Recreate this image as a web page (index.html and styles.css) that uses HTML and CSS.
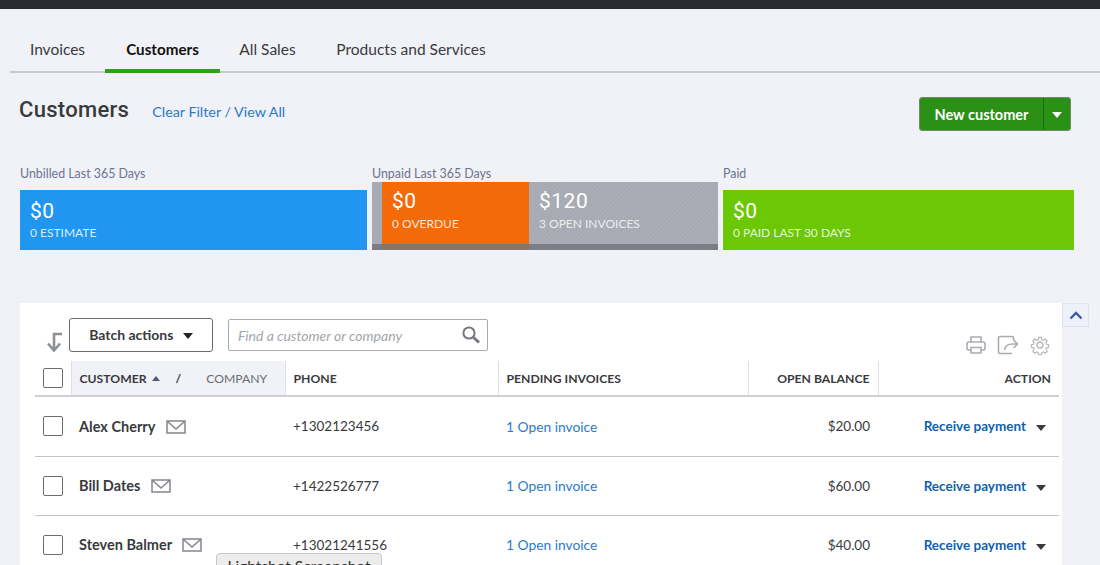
FILE: index.html
```html
<!DOCTYPE html>
<html lang="en">
<head>
  <meta charset="UTF-8" />
  <title>Customers</title>
  <link rel="stylesheet" href="styles.css">
</head>
<body>
  <div class="topbar"></div>

  <nav class="tabs">
    <a class="tab">Invoices</a>
    <a class="tab active">Customers</a>
    <a class="tab">All Sales</a>
    <a class="tab">Products and Services</a>
  </nav>

  <header class="page-head">
    <h1>Customers</h1>
    <a class="clear-link">Clear Filter / View All</a>
    <div class="new-btn">
      <span class="new-label">New customer</span>
      <span class="new-caret"><i class="caret white"></i></span>
    </div>
  </header>

  <section class="stats">
    <div class="stat-col">
      <div class="stat-label">Unbilled Last 365 Days</div>
      <div class="stat-bar blue">
        <div class="amount">$0</div>
        <div class="sub">0 ESTIMATE</div>
      </div>
    </div>
    <div class="stat-col">
      <div class="stat-label tight">Unpaid Last 365 Days</div>
      <div class="unpaid">
        <div class="overdue">
          <div class="amount">$0</div>
          <div class="sub">0 OVERDUE</div>
        </div>
        <div class="open">
          <div class="amount">$120</div>
          <div class="sub">3 OPEN INVOICES</div>
        </div>
      </div>
    </div>
    <div class="stat-col">
      <div class="stat-label">Paid</div>
      <div class="stat-bar green">
        <div class="amount">$0</div>
        <div class="sub">0 PAID LAST 30 DAYS</div>
      </div>
    </div>
  </section>

  <div class="table-wrap">
    <section class="card">
      <div class="toolbar">
        <svg class="sort-arrow" width="18" height="20" viewBox="0 0 18 20" fill="none" stroke="#8d9096" stroke-width="2.600">
          <path d="M16 2H8V18M2 11.500l6 7 6-7" />
        </svg>
        <button class="batch">Batch actions <i class="caret"></i></button>
        <div class="search">
          <span class="placeholder">Find a customer or company</span>
          <svg width="20" height="20" viewBox="0 0 20 20" fill="none" stroke="#77787e">
            <circle cx="8" cy="8" r="5.600" stroke-width="2" />
            <path d="M12.500 12.500l5.500 5" stroke-width="3" />
          </svg>
        </div>
        <div class="tools">
          <svg width="20" height="20" viewBox="0 0 20 20" fill="none" stroke="#a9acb2" stroke-width="1.600">
            <path d="M5 7V2h10v5M5 15H2.500a1.500 1.500 0 0 1-1.500-1.500V9a2 2 0 0 1 2-2h14a2 2 0 0 1 2 2v4.500a1.500 1.500 0 0 1-1.500 1.500H15M5 12.500h10V18H5z" />
          </svg>
          <svg width="22" height="20" viewBox="0 0 22 20" fill="none" stroke="#a9acb2" stroke-width="1.600">
            <path d="M15 18.500H3a1.500 1.500 0 0 1-1.500-1.500V3A1.500 1.500 0 0 1 3 1.500h12A1.500 1.500 0 0 1 16.500 3v2" />
            <path d="M7.500 15c.5-4 3.500-6 8-6h5M16.500 5l4 4-4 4" />
          </svg>
          <svg width="20" height="20" viewBox="0 0 20 20" fill="none" stroke="#b4b6bc" stroke-width="1.300">
            <circle cx="10" cy="10" r="3" />
            <path d="M8.500 1.500h3l.5 2.500 1.600.7 2.200-1.400 2.100 2.100-1.400 2.200.7 1.600 2.300.5v3l-2.300.5-.7 1.600 1.400 2.200-2.100 2.100-2.200-1.400-1.600.7-.5 2.300h-3l-.5-2.300-1.600-.7-2.200 1.400-2.100-2.100 1.400-2.200-.7-1.600-2.300-.5v-3l2.300-.5.7-1.600-1.400-2.200 2.100-2.100 2.200 1.400 1.600-.7z" transform="translate(1 1) scale(.9)" />
          </svg>
        </div>
      </div>

      <table class="customers">
        <colgroup>
          <col class="c-check"><col class="c-name"><col class="c-phone"><col class="c-pending"><col class="c-balance"><col class="c-action">
        </colgroup>
        <thead>
          <tr>
            <th><span class="check"></span></th>
            <th class="sorted"><b>CUSTOMER</b><i class="sort-up"></i><span class="slash">/</span><span class="company">COMPANY</span></th>
            <th>PHONE</th>
            <th>PENDING INVOICES</th>
            <th class="right">OPEN BALANCE</th>
            <th class="right last">ACTION</th>
          </tr>
        </thead>
        <tbody>
          <tr>
            <td><span class="check"></span></td>
            <td class="name">Alex Cherry <svg class="mail" width="20" height="14" viewBox="0 0 20 14" fill="none" stroke="#85878d" stroke-width="1.500"><path d="M1 1h18v12H1zM1 1l9 8 9-8" /></svg></td>
            <td>+1302123456</td>
            <td><a class="link">1 Open invoice</a></td>
            <td class="right">$20.00</td>
            <td class="right act"><a class="pay">Receive payment</a><i class="caret small"></i></td>
          </tr>
          <tr>
            <td><span class="check"></span></td>
            <td class="name">Bill Dates <svg class="mail" width="20" height="14" viewBox="0 0 20 14" fill="none" stroke="#85878d" stroke-width="1.500"><path d="M1 1h18v12H1zM1 1l9 8 9-8" /></svg></td>
            <td>+1422526777</td>
            <td><a class="link">1 Open invoice</a></td>
            <td class="right">$60.00</td>
            <td class="right act"><a class="pay">Receive payment</a><i class="caret small"></i></td>
          </tr>
          <tr>
            <td><span class="check"></span></td>
            <td class="name">Steven Balmer <svg class="mail" width="20" height="14" viewBox="0 0 20 14" fill="none" stroke="#85878d" stroke-width="1.500"><path d="M1 1h18v12H1zM1 1l9 8 9-8" /></svg></td>
            <td>+13021241556</td>
            <td><a class="link">1 Open invoice</a></td>
            <td class="right">$40.00</td>
            <td class="right act"><a class="pay">Receive payment</a><i class="caret small"></i></td>
          </tr>
        </tbody>
      </table>
    </section>
    <button class="collapse">
      <svg width="14" height="9" viewBox="0 0 14 9" fill="none" stroke="#3b5aa5" stroke-width="2.400"><path d="M1.500 7.500L7 2l5.500 5.500" /></svg>
    </button>
  </div>

  <div class="shot-tip">Lightshot Screenshot</div>
</body>
</html>
```

FILE: styles.css
```css
* { box-sizing: border-box; }
html, body { height: 565px; overflow: hidden; }
body { margin: 0; background: #f0f2f7; color: #393a3d; font-family: Lato, Arial, sans-serif; font-size: 14px; position: relative; }
a { cursor: pointer; }

.topbar { height: 9px; background: #2b2c32; }

/* tabs */
.tabs { display: flex; height: 64px; margin-left: 10px; border-bottom: 2px solid #c9cace; }
.tab { width: 95px; height: 64px; padding-top: 30px; text-align: center; font-size: 15.500px; line-height: 20px; color: #393a3d; white-space: nowrap; }
.tab.active { width: 115px; font-weight: 700; font-size: 15.200px; color: #111; border-bottom: 4px solid #2ca01c; }
.tab:nth-child(4) { width: 192px; }

/* heading */
.page-head { display: flex; align-items: flex-start; height: 92px; padding: 24px 29px 0 19px; }
h1 { margin: 0 23px 0 0; font-family: Roboto, sans-serif; font-size: 22px; line-height: 26px; font-weight: 500; letter-spacing: .3px; color: #393a3d; }
.clear-link { margin-top: 6px; color: #2b7bc9; font-size: 14.300px; line-height: 18px; }
.new-btn { display: flex; margin-left: auto; height: 34px; width: 152px; background: #2a9116; border: 1px solid #6f8a6b; border-radius: 3px; color: #fff; font-weight: 700; font-size: 14.500px; }
.new-label { flex: 1; display: flex; align-items: center; justify-content: center; }
.new-caret { width: 27px; display: flex; align-items: center; justify-content: center; border-left: 1px solid #1d6b0e; }

.caret { display: inline-block; width: 0; height: 0; border-left: 5.500px solid transparent; border-right: 5.500px solid transparent; border-top: 6px solid #222; }
.caret.white { border-top-color: #fff; margin-top: 2px; }
.caret.small { border-left-width: 5px; border-right-width: 5px; margin-left: 10px; border-top-color: #393a3d; }

/* money bars */
.stats { display: grid; grid-template-columns: 347px 346px 351px; gap: 5px; margin: 0 0 0 20px; height: 138px; }
.stat-label { height: 25px; padding-top: 1px; font-size: 12.400px; line-height: 16px; color: #6b7391; }
.stat-label.tight { height: 17px; }
.stat-bar { height: 60px; padding: 8px 10px; color: #fff; }
.blue { background: #2196f0; }
.green { background: #6cc804; }
.amount { font-family: Roboto, sans-serif; font-size: 21px; line-height: 26px; letter-spacing: .5px; }
.sub { margin-top: 1px; font-size: 12px; line-height: 16px; color: rgba(255,255,255,.85); }
.unpaid { display: flex; height: 68px; padding-left: 10px; color: #fff; background: repeating-linear-gradient(135deg, #a6a9b2 0 1.500px, #abaeb6 1.500px 3px); box-shadow: inset 0 -6px 0 #7b7e85; }
.overdue { width: 147px; padding: 6px 10px; background: #f46a09; box-shadow: inset 0 -6px 0 #8a7464; }
.open { flex: 1; padding: 6px 10px; }
.unpaid .sub { margin-top: 2px; }
.open .sub { color: rgba(255,255,255,.8); }

/* table card */
.table-wrap { display: flex; align-items: flex-start; margin-left: 20px; }
.card { width: 1042px; height: 262px; padding: 15px 3px 0 15px; background: #fff; }
.collapse { width: 27px; height: 24px; padding: 0; background: #eff1f8; border: 1px solid #dfe2ee; }
.toolbar { display: flex; align-items: flex-start; height: 43px; }
.sort-arrow { margin: 14px 5px 0 11px; }
.batch { width: 144px; height: 34px; padding-bottom: 2px; background: #fff; border: 1px solid #6b6c72; border-radius: 3px; font: 700 14px Lato, sans-serif; color: #393a3d; }
.batch .caret { margin-left: 6px; vertical-align: 1px; }
.search { display: flex; align-items: center; justify-content: space-between; width: 260px; height: 32px; margin: 1px 0 0 15px; padding: 0 6px 0 9px; border: 1px solid #a9abb0; border-radius: 2px; }
.placeholder { font-style: italic; font-size: 14px; color: #a3a5aa; }
.tools { display: flex; gap: 11px; margin: 17px 9px 0 auto; }

.customers { width: 1024px; table-layout: fixed; border-collapse: collapse; }
.c-check { width: 36px; }
.c-name { width: 214px; }
.c-phone { width: 213px; }
.c-pending { width: 250px; }
.c-balance { width: 130px; }
.c-action { width: 181px; }
th { height: 35px; padding: 0 8px; text-align: left; font-size: 12.200px; font-weight: 700; color: #393a3d; border-bottom: 2px solid #cfd0d6; border-left: 1px solid #dfe0e4; white-space: nowrap; }
th:first-child { border-left: 0; padding: 0 0 0 8px; }
th.sorted { background: #f0f2f7; }
th b { font-weight: 700; }
.sort-up { display: inline-block; margin: 0 0 2px 5px; border-left: 4px solid transparent; border-right: 4px solid transparent; border-bottom: 5px solid #4a5a7a; }
.slash { margin: 0 25px 0 16px; }
.company { font-weight: 400; color: #6b6c72; }
.right { text-align: right; }
.last { padding-right: 8px; }
td { height: 59px; padding: 0 8px; font-size: 13.500px; white-space: nowrap; border-bottom: 1px solid #c4c5c9; }
tbody tr:first-child td { height: 60px; }
td.act { padding-right: 13px; }
.check { display: block; width: 20px; height: 20px; background: #fff; border: 1px solid #6b6c72; border-radius: 2px; }
td.name { font-weight: 700; font-size: 14.500px; }
.mail { margin-left: 7px; vertical-align: -2px; }
.link { color: #2b7bc9; font-size: 13.800px; }
.pay { color: #0f62ad; font-weight: 700; font-size: 13.500px; }

.shot-tip { position: absolute; left: 216px; top: 553px; width: 166px; height: 30px; padding-top: 3px; text-align: center; font-size: 15.500px; color: #333; background: #ececec; border: 1px solid #c8c8c8; border-radius: 4px; }
```
